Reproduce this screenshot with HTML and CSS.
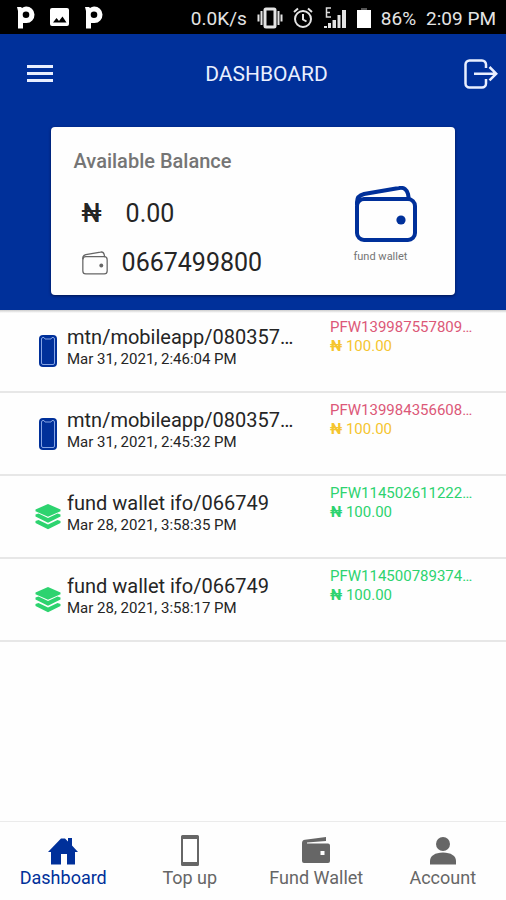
FILE: index.html
```html
<!DOCTYPE html>
<html lang="en">
<head>
<meta charset="utf-8">
<meta name="viewport" content="width=device-width, initial-scale=1">
<title>Dashboard</title>
<link rel="stylesheet" href="styles.css">
</head>
<body>
<svg class="defs" aria-hidden="true">
  <symbol id="p-mark" viewBox="0 0 18 23"><path fill="currentColor" fill-rule="evenodd" d="M0 1h4l1 1a8 8 0 0 1 4-1.500A8.200 8.200 0 0 1 9.500 17H6v5.500H1V5zM9 5.500a3.300 3.300 0 1 0 0 6.600 3.300 3.300 0 0 0 0-6.600z"/></symbol>
  <symbol id="wallet" viewBox="0 0 62 56"><g fill="none" stroke="currentColor"><rect x="2" y="13" width="58" height="41" rx="7"/><path d="M2 19v-3c0-5 3-7 7-8l35-6c5-1 8 2 9 6l1 6"/></g><circle cx="46" cy="34" r="4.600" fill="currentColor"/></symbol>
  <symbol id="phone" viewBox="0 0 18 32"><rect width="18" height="32" rx="4" fill="#00309a"/><path fill="none" stroke="#86a4e4" d="M5 2.500H4a1.500 1.500 0 0 0-1.500 1.500v24A1.500 1.500 0 0 0 4 29.500h10a1.500 1.500 0 0 0 1.500-1.500V4A1.500 1.500 0 0 0 14 2.500h-1l-1 1.500H6z"/></symbol>
  <symbol id="layers" viewBox="0 0 26 26"><path fill="currentColor" d="M13 0l12.500 5.500v1.800L13 12.800.500 7.300V5.500zM.500 10.500l3-1L13 14l9.500-4.500 3 1v2L13 18.800.500 12.500zM.500 17l3-1L13 20.500l9.500-4.500 3 1v2L13 25.300.500 19z"/></symbol>
</svg>

<div class="status">
  <div class="status-side">
    <svg class="p-mark"><use href="#p-mark"/></svg>
    <svg width="20" height="20" viewBox="0 0 20 20"><rect y="1" width="19" height="18" rx="2" fill="#fff"/><path d="M3 15.500l3.500-4.500 2.500 3 3.500-4.500 4 6z"/></svg>
    <svg class="p-mark"><use href="#p-mark"/></svg>
  </div>
  <div class="status-side status-info">
    <span>0.0K/s</span>
    <svg width="26" height="22" viewBox="0 0 26 22" fill="none" stroke="#e4e4e4" stroke-width="2"><rect x="8" y="2" width="10" height="18" rx="1" stroke-width="3"/><path d="M4.500 4v14M21.500 4v14M1.500 7.500v7M24.500 7.500v7"/></svg>
    <svg width="20" height="22" viewBox="0 0 20 22" fill="none" stroke="#e4e4e4" stroke-width="2"><circle cx="10" cy="12" r="8"/><path d="M10 7v5.500l3.500 2M1 5l4-3.500M19 5l-4-3.500"/></svg>
    <svg width="24" height="22" viewBox="0 0 24 22"><path fill="none" stroke="#ddd" stroke-width="1.500" d="M8 1H3.500v9H8M3.500 5.500H7"/><path fill="#e4e4e4" d="M1 19h3v2H1zM5 16h3v5H5zM9.500 13h3.500v8H9.500zM14.500 8h3v13h-3zM19 3h4v18h-4z"/></svg>
    <svg width="14" height="20" viewBox="0 0 14 20"><path fill="#fff" d="M0 2h14v18H0z"/><path fill="#555" d="M4 0h6v2H4z"/></svg>
    <span>86%</span>
    <time>2:09 PM</time>
  </div>
</div>

<header class="hero">
  <div class="toolbar">
    <button class="icon-button" type="button" aria-label="Menu"><svg width="26" height="20" viewBox="0 0 26 20"><path stroke="#e9efff" stroke-width="3" d="M0 2.500h26M0 9.500h26M0 16.500h26"/></svg></button>
    <h1>DASHBOARD</h1>
    <button class="icon-button" type="button" aria-label="Log out"><svg width="34" height="30" viewBox="0 0 34 30" fill="none" stroke="#e9efff" stroke-width="2.500"><path d="M22 9V5.500a4 4 0 0 0-4-4H5.500a4 4 0 0 0-4 4v19a4 4 0 0 0 4 4H18a4 4 0 0 0 4-4V20M10 14.700h22M25.500 8l6.700 6.700-6.700 6.700"/></svg></button>
  </div>
  <section class="card">
    <div class="balance">
      <h2>Available Balance</h2>
      <p class="amount"><b>₦</b><span>0.00</span></p>
      <p class="amount"><svg class="wallet-small"><use href="#wallet"/></svg><span>0667499800</span></p>
    </div>
    <button class="fund" type="button"><svg class="wallet-large"><use href="#wallet"/></svg><span>fund wallet</span></button>
  </section>
</header>

<main>
  <ul class="transactions">
    <li class="row debit">
      <svg class="row-icon phone"><use href="#phone"/></svg>
      <div class="detail"><p class="name">mtn/mobileapp/080357…</p><p class="date">Mar 31, 2021, 2:46:04 PM</p></div>
      <div class="payment"><p class="ref">PFW139987557809…</p><p class="sum"><b>₦</b> 100.00</p></div>
    </li>
    <li class="row debit">
      <svg class="row-icon phone"><use href="#phone"/></svg>
      <div class="detail"><p class="name">mtn/mobileapp/080357…</p><p class="date">Mar 31, 2021, 2:45:32 PM</p></div>
      <div class="payment"><p class="ref">PFW139984356608…</p><p class="sum"><b>₦</b> 100.00</p></div>
    </li>
    <li class="row credit">
      <svg class="row-icon layers"><use href="#layers"/></svg>
      <div class="detail"><p class="name">fund wallet ifo/066749</p><p class="date">Mar 28, 2021, 3:58:35 PM</p></div>
      <div class="payment"><p class="ref">PFW114502611222…</p><p class="sum"><b>₦</b> 100.00</p></div>
    </li>
    <li class="row credit">
      <svg class="row-icon layers"><use href="#layers"/></svg>
      <div class="detail"><p class="name">fund wallet ifo/066749</p><p class="date">Mar 28, 2021, 3:58:17 PM</p></div>
      <div class="payment"><p class="ref">PFW114500789374…</p><p class="sum"><b>₦</b> 100.00</p></div>
    </li>
  </ul>
</main>

<nav class="tabs">
  <a class="active" href="#dashboard" aria-current="page"><svg width="32" height="32" viewBox="0 0 32 32"><path fill="currentColor" d="M1 18L14 4.500h4l3 3V4h4v7.500l6 6.500h-3v12.500h-8V20h-6v10.500H4V18z"/></svg>Dashboard</a>
  <a href="#top-up"><svg width="32" height="32" viewBox="0 0 32 32"><path fill="currentColor" fill-rule="evenodd" d="M8.500 1h15a1.500 1.500 0 0 1 1.500 1.500v28a1.500 1.500 0 0 1-1.500 1.500h-15A1.500 1.500 0 0 1 7 30.500v-28A1.500 1.500 0 0 1 8.500 1zM9 5v23h14V5z"/></svg>Top up</a>
  <a href="#fund-wallet"><svg width="32" height="32" viewBox="0 0 32 32"><path fill="currentColor" fill-rule="evenodd" d="M2 9c0-2 1-3 3-3.300L26 3v4L7 8.500V9.500h21a2 2 0 0 1 2 2V27a2 2 0 0 1-2 2H4a2 2 0 0 1-2-2zM20.500 17v4h4v-4z"/></svg>Fund Wallet</a>
  <a href="#account"><svg width="32" height="32" viewBox="0 0 32 32"><circle cx="16" cy="10" r="7" fill="currentColor"/><path fill="currentColor" d="M3 30.500V27c0-5 5-8.500 13-8.500S29 22 29 27v3.500z"/></svg>Account</a>
</nav>
</body>
</html>
```

FILE: styles.css
```css
* { box-sizing: border-box; }
body {
  margin: 0;
  min-height: 100vh;
  display: flex;
  flex-direction: column;
  background: #fefefe;
  color: #252525;
  font-family: Roboto, "Noto Sans", sans-serif;
}
h1, h2, p, ul { margin: 0; padding: 0; }
ul { list-style: none; }
button { border: 0; padding: 0; background: none; font: inherit; cursor: pointer; }
svg { display: block; flex: none; }
.defs { position: absolute; width: 0; height: 0; }

.status {
  display: flex;
  justify-content: space-between;
  align-items: center;
  height: 34px;
  padding: 0 10px 0 17px;
  background: #000;
  color: #e4e4e4;
  font-size: 19px;
}
.status-side { display: flex; align-items: center; gap: 15px; }
.status-info { gap: 10px; padding-top: 2px; }
.p-mark { width: 18px; height: 23px; color: #fff; }

.hero {
  padding-bottom: 15px;
  background: #00309a;
}
.toolbar {
  display: grid;
  grid-template-columns: 1fr auto 1fr;
  align-items: center;
  height: 79px;
  padding: 0 8px 0 27px;
  margin-bottom: 14px;
}
.toolbar h1 { padding-left: 8px; color: #e9efff; font-size: 21px; font-weight: 400; }
.icon-button:last-child { justify-self: end; }
.card {
  display: flex;
  justify-content: space-between;
  height: 168px;
  margin: 0 10%;
  padding: 22px 38px 0 23px;
  border-radius: 4px;
  background: #fefefe;
  box-shadow: 0 1px 3px #001450;
}
.balance h2 { color: #757575; font-size: 20px; line-height: 24px; font-weight: 500; margin-bottom: 16px; }
.amount { display: flex; align-items: center; height: 49px; font-size: 25px; padding-left: 8px; }
.amount b { width: 44px; font-weight: 500; }
.wallet-small { width: 26px; height: 24px; color: #666; stroke-width: 3px; margin-right: 14px; }
.fund {
  display: flex;
  flex-direction: column;
  align-items: flex-end;
  align-self: flex-start;
  padding-top: 37px;
  color: #757575;
  font-size: 11px;
}
.wallet-large { width: 62px; height: 56px; color: #00309a; stroke-width: 4px; margin-bottom: 8px; }
.fund span { padding-right: 10px; }

.transactions { background: linear-gradient(#ccc, #fefefe) top / 100% 3px no-repeat; }
.row {
  display: grid;
  grid-template-columns: 32px minmax(0, 1fr) minmax(0, 150px);
  height: 83px;
  padding: 0 26px 0 35px;
  border-bottom: 2px solid #e7e7e7;
}
.row-icon { width: 26px; }
.phone { height: 32px; margin-top: 25px; }
.layers { height: 26px; margin-top: 28px; }
.detail { padding-top: 15px; }
.name { font-size: 20px; line-height: 24px; }
.date { font-size: 15px; line-height: 20px; }
.payment { padding-top: 8px; font-size: 15px; line-height: 19px; white-space: nowrap; }
.debit .ref { color: #dc5878; }
.debit .sum { color: #f5c52f; }
.credit .row-icon, .credit .payment { color: #2dd36f; }

.tabs {
  display: grid;
  grid-template-columns: repeat(4, 1fr);
  margin-top: auto;
  height: 79px;
  border-top: 1px solid #ebebeb;
}
.tabs a {
  display: flex;
  flex-direction: column;
  align-items: center;
  padding-top: 12px;
  color: #666;
  font-size: 18px;
  line-height: 24px;
  text-decoration: none;
}
.tabs .active { color: #00309a; }
```
